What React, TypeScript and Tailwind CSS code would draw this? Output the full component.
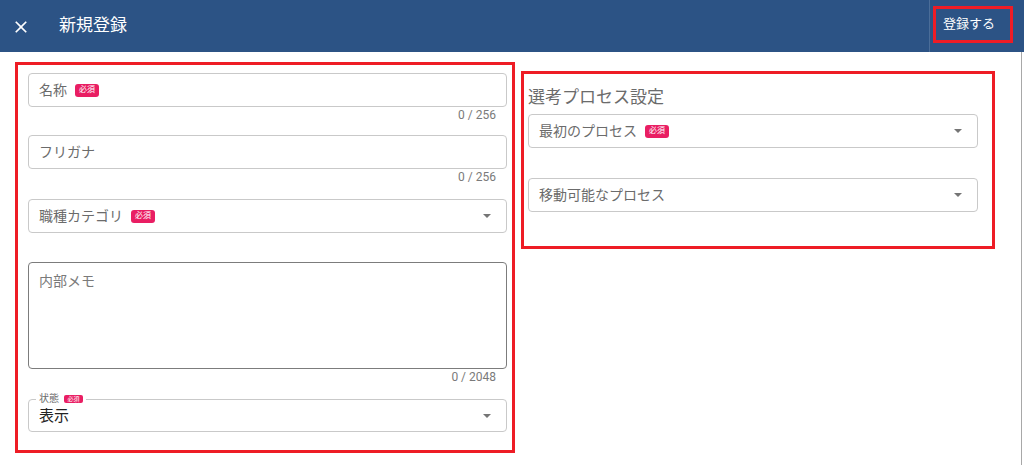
import React from "react";

const jp = "font-['Roboto','Noto_Sans_CJK_JP',sans-serif]";

function Badge({ small }: { small?: boolean }) {
  if (small)
    return (
      <span className="inline-flex h-[8px] w-[19px] items-center justify-center rounded-[2px] bg-[#e91e63] text-[6px] leading-none text-white">
        必須
      </span>
    );
  return (
    <span className="inline-flex h-[13px] w-[24px] items-center justify-center rounded-[3px] bg-[#e91e63] text-[8px] leading-none text-white">
      必須
    </span>
  );
}

function Arrow() {
  return (
    <span className="h-0 w-0 border-x-[4px] border-t-[4px] border-x-transparent border-t-[#757575]" />
  );
}

function Field({
  label,
  required,
  select,
}: {
  label: string;
  required?: boolean;
  select?: boolean;
}) {
  return (
    <div className="flex h-[34px] items-center rounded-[4px] border border-[#c9c9c9] pl-[10px] pr-[15px]">
      <span className="text-[14px] text-[#6b6b6b]">{label}</span>
      {required && (
        <span className="ml-[8px] flex">
          <Badge />
        </span>
      )}
      <span className="flex-1" />
      {select && <Arrow />}
    </div>
  );
}

function Counter({ text, h }: { text: string; h: string }) {
  return (
    <div className={`${h} pr-[11px] pt-[1px] text-right text-[12px] leading-[14px] text-[#7a7a7a]`}>
      {text}
    </div>
  );
}

export default function App() {
  return (
    <div className={`h-[465px] w-[1024px] overflow-hidden bg-white ${jp}`}>
      {/* Header */}
      <div className="flex h-[52px] items-stretch bg-[#2c5385]">
        <div className="flex items-center pl-[11px] pt-[2px]">
          <svg viewBox="0 0 24 24" className="h-[20px] w-[20px] fill-white">
            <path d="M19 6.41 17.59 5 12 10.59 6.41 5 5 6.41 10.59 12 5 17.59 6.41 19 12 13.41 17.59 19 19 17.59 13.41 12z" />
          </svg>
        </div>
        <div className="flex items-center pl-[28px] text-[17px] text-white">新規登録</div>
        <div className="flex-1" />
        <div className="flex items-start border-l border-[#4b6d98] pl-[3px] pr-[11px] pt-[6px]">
          <div className="flex h-[37px] w-[80px] items-center border-[3px] border-[#ee1c25] pb-[2px] pl-[7px] text-[13px] text-white">
            登録する
          </div>
        </div>
      </div>

      {/* Body */}
      <div className="flex h-[413px]">
        <div className="flex w-[1021px] items-start gap-[6px] pl-[15px] pt-[10px]">
          {/* Left panel */}
          <div className="h-[391px] w-[500px] border-[3px] border-[#ee1c25] pl-[10px] pr-[5px] pt-[8px]">
            <Field label="名称" required />
            <Counter text="0 / 256" h="h-[28px]" />
            <Field label="フリガナ" />
            <Counter text="0 / 256" h="h-[30px]" />
            <Field label="職種カテゴリ" required select />
            <div className="h-[29px]" />
            <div className="h-[107px] rounded-[4px] border border-[#7c7c7c] pl-[10px] pt-[6px]">
              <span className="text-[14px] text-[#7a7a7a]">内部メモ</span>
            </div>
            <Counter text="0 / 2048" h="h-[30px]" />
            <div className="relative flex h-[33px] items-center rounded-[4px] border border-[#c9c9c9] pl-[10px] pr-[15px] pt-[1px]">
              <div className="absolute left-[7px] top-[-8px] flex items-center gap-[5px] bg-white px-[3px]">
                <span className="text-[10px] leading-[14px] text-[#6b6b6b]">状態</span>
                <Badge small />
              </div>
              <span className="text-[15px] text-[#222]">表示</span>
              <span className="flex-1" />
              <Arrow />
            </div>
          </div>

          {/* Right panel */}
          <div className="mt-[9px] h-[178px] w-[474px] border-[3px] border-[#ee1c25] pl-[4px] pr-[14px] pt-[13px]">
            <div className="h-[27px] text-[17px] leading-[21px] text-[#6b6b6b]">選考プロセス設定</div>
            <Field label="最初のプロセス" required select />
            <div className="h-[30px]" />
            <Field label="移動可能なプロセス" select />
          </div>
        </div>
        <div className="w-[1px] bg-[#a8a8a8]" />
      </div>
    </div>
  );
}
